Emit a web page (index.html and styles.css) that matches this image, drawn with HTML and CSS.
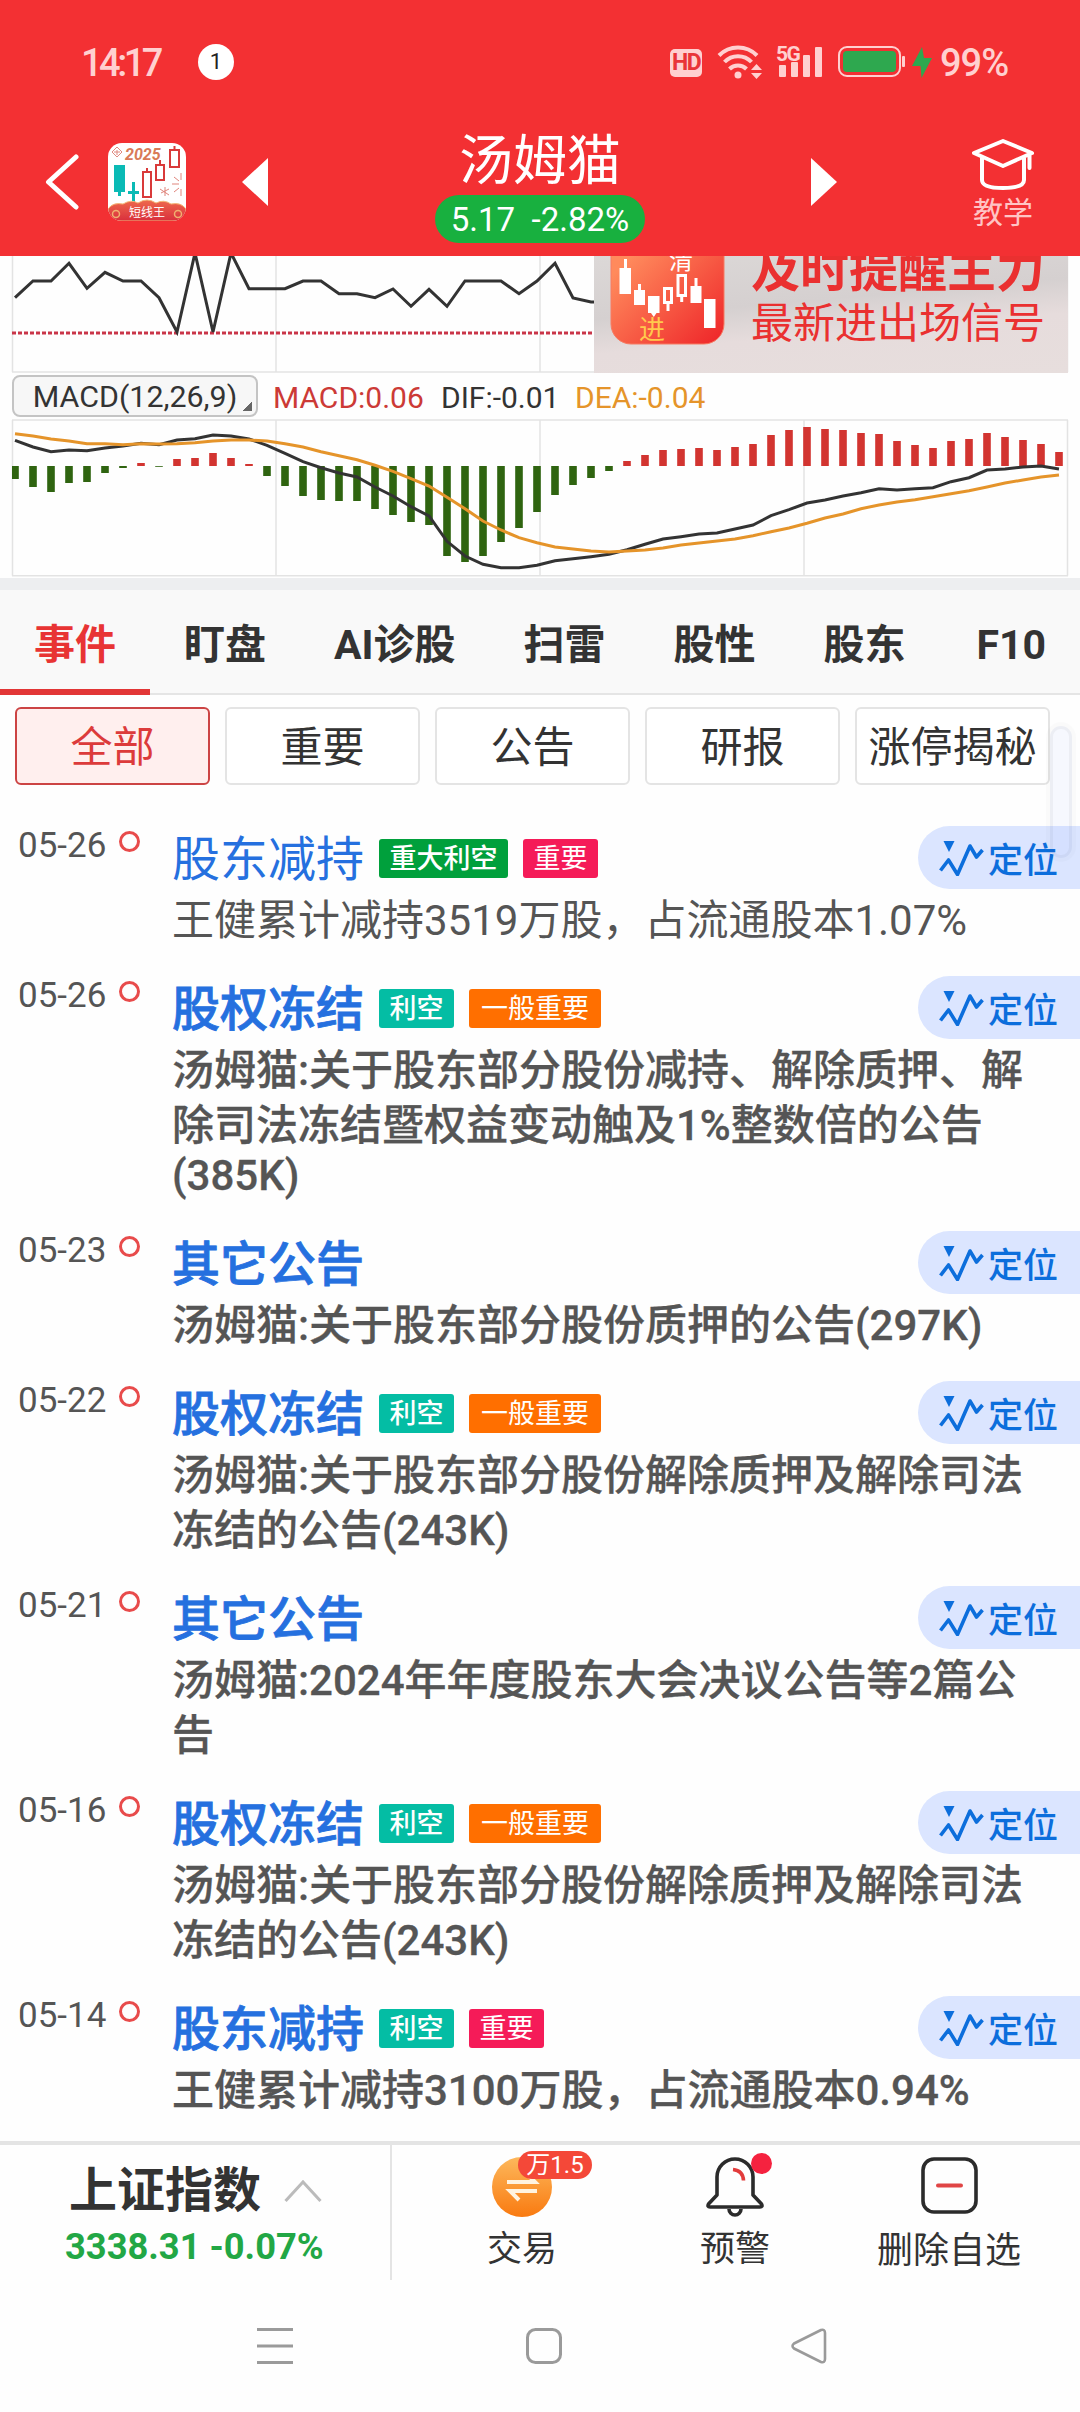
FILE: index.html
```html
<!DOCTYPE html>
<html lang="zh-CN">

<head>
    <meta charset="UTF-8">
    <meta name="viewport" content="width=device-width, initial-scale=1.0">
    <title>汤姆猫 5.17 -2.82%</title>
    <link rel="stylesheet" href="styles.css">
</head>

<body>
    <svg class="defs" width="0" height="0">
        <symbol id="locate" viewBox="0 0 46 36">
            <path d="M4.500 1h11l-5.500 11z" fill="currentColor" />
            <path d="M1.500 30.500l8-10.500L18.500 34.500 31 6l6.500 11 6-7" fill="none" stroke="currentColor" stroke-width="3.600" stroke-linejoin="round" />
        </symbol>
    </svg>

    <header class="header">
        <div class="status-bar">
            <span class="time">14:17</span>
            <span class="notice">1</span>
            <span class="hd">HD</span>
            <svg class="wifi" width="46" height="36" viewBox="0 0 46 36">
                <g fill="none" stroke="#ffd0d0" stroke-width="4">
                    <path d="M2 11.500a26.500 26.500 0 0 1 38 0" />
                    <path d="M7.500 18a18.500 18.500 0 0 1 27 0" />
                    <path d="M12.500 25a12 12 0 0 1 17 0" />
                </g>
                <circle cx="21" cy="31" r="3.500" fill="#ffd0d0" />
                <path d="M34 26h11l-5.500-6zM34 29h11l-5.500 6z" fill="#ffd0d0" />
            </svg>
            <div class="signal">
                <span class="net">5G</span>
                <svg width="46" height="32" viewBox="0 0 46 32" fill="#ffd0d0">
                    <rect x="3" y="19" width="7" height="12" rx="1" />
                    <rect x="15" y="16" width="7" height="15" rx="1" />
                    <rect x="27" y="9" width="7" height="22" rx="1" />
                    <rect x="39" y="1" width="7" height="30" rx="1" />
                </svg>
            </div>
            <svg class="battery" width="68" height="32" viewBox="0 0 68 32">
                <rect x="1" y="1" width="61" height="29" rx="8" fill="none" stroke="#ffd0d0" stroke-width="2" />
                <rect x="5" y="5" width="53" height="21" rx="4" fill="#2ea84f" />
                <rect x="64" y="10" width="3" height="11" rx="1" fill="#ffd0d0" />
            </svg>
            <svg class="bolt" width="20" height="31" viewBox="0 0 20 31">
                <path d="M10 0L0 19h8.500l1 12L20 11h-8z" fill="#2ea84f" />
            </svg>
            <span class="percent">99%</span>
        </div>
        <div class="title-bar">
            <svg class="back" width="34" height="56" viewBox="0 0 34 56">
                <path d="M31 3L3.500 28 31 53" fill="none" stroke="#fff" stroke-width="5" stroke-linecap="round" stroke-linejoin="round" />
            </svg>
            <svg class="app-icon" width="78" height="78" viewBox="0 0 78 78">
                <defs>
                    <clipPath id="iconClip"><rect width="78" height="78" rx="14" /></clipPath>
                    <linearGradient id="ribbon" x2="0" y2="1">
                        <stop offset="0" stop-color="#ee6a4d" />
                        <stop offset="1" stop-color="#d92f3c" />
                    </linearGradient>
                </defs>
                <g clip-path="url(#iconClip)">
                    <rect width="78" height="78" fill="#fff" />
                    <text class="icon-year" x="17" y="17">2025</text>
                    <path d="M9 4l5 5-5 5-5-5zM9 7v5M6 9h6" fill="none" stroke="#e08a80" />
                    <path d="M6 22h11v27h-4v4h-3v-4H6z" fill="#0abab5" />
                    <path d="M20 48h11v3H27v9h-3v-9h-4zM24 39h3v10h-3z" fill="#0abab5" />
                    <g fill="none" stroke="#d93a3a" stroke-width="2">
                        <path d="M35 29h8v25h-8zM39 25v4M48 22h8v15h-8zM52 17v5M62 7h9v17h-9zM66.500 3v4" />
                    </g>
                    <g stroke="#e0857c" stroke-width="1">
                        <path d="M73 30v7M66 34l5 4M64 41h7M66 49l5-4M73 46v7M53 50l8-4M57 44v9M52 46l9 6" fill="none" />
                    </g>
                    <path d="M0 66q5-7 15-5 8-5 15-1 9-6 18 0 8-4 15 1 10-2 15 5v12H0z" fill="url(#ribbon)" stroke="#f3b878" stroke-width="1" />
                    <circle cx="8" cy="71" r="3.500" fill="none" stroke="#f0b070" stroke-width="1.500" />
                    <circle cx="70" cy="71" r="3.500" fill="none" stroke="#f0b070" stroke-width="1.500" />
                    <text class="icon-name" x="39" y="74">短线王</text>
                </g>
            </svg>
            <svg class="prev" width="26" height="48" viewBox="0 0 26 48">
                <path d="M26 0v48L0 24z" fill="#fff" />
            </svg>
            <div class="stock">
                <h1>汤姆猫</h1>
                <span class="quote">5.17&nbsp; -2.82%</span>
            </div>
            <svg class="next" width="26" height="48" viewBox="0 0 26 48">
                <path d="M0 0v48l26-24z" fill="#fff" />
            </svg>
            <div class="teach">
                <svg width="62" height="52" viewBox="0 0 62 52" fill="none" stroke="#fff" stroke-width="4" stroke-linejoin="round" stroke-linecap="round">
                    <path d="M31 2L2 14l29 13 29-13zM10 19v22q0 8 21 8t21-8V19M57.500 16v13" />
                </svg>
                <span>教学</span>
            </div>
        </div>
    </header>

    <section class="charts">
        <svg id="trend" width="1080" height="117" viewBox="0 256 1080 117"></svg>
        <div class="banner">
            <svg width="474" height="117" viewBox="594 256 474 117">
                <defs>
                    <linearGradient id="promo" x2="1" y2="1">
                        <stop offset="0.200" stop-color="#ff8a5c" />
                        <stop offset="1" stop-color="#ee2328" />
                    </linearGradient>
                </defs>
                <rect x="611" y="231" width="113" height="113" rx="20" fill="url(#promo)" stroke="#f77b62" />
                <g fill="#fff">
                    <rect x="619.500" y="268" width="11.500" height="26" />
                    <rect x="624" y="259" width="3" height="10" />
                    <rect x="634" y="290" width="11" height="15" />
                    <rect x="638" y="284" width="3" height="7" />
                    <rect x="648" y="296" width="11.500" height="17" />
                    <path d="M651 313h5.500l-2.700 4z" />
                    <rect x="690.500" y="286" width="11" height="17" />
                    <rect x="694.500" y="278" width="3" height="9" />
                    <rect x="704" y="299" width="11.500" height="29" />
                </g>
                <g fill="none" stroke="#fff" stroke-width="3">
                    <path d="M664.500 288.500h7v14h-7zM668 303v8M678 275.500h7.500v20H678zM681.700 296v6" />
                </g>
                <text class="promo-out" x="669" y="269">清</text>
                <text class="promo-in" x="639" y="339">进</text>
            </svg>
            <div class="banner-text">
                <strong>及时提醒主力</strong>
                <span>最新进出场信号</span>
            </div>
        </div>
        <div class="macd-row">
            <button class="macd-select">MACD(12,26,9)</button>
            <span class="macd">MACD:0.06</span>
            <span class="dif">DIF:-0.01</span>
            <span class="dea">DEA:-0.04</span>
        </div>
        <svg id="macd" width="1080" height="158" viewBox="0 419 1080 158"></svg>
    </section>

    <nav class="tabs">
        <a class="active">事件</a>
        <a>盯盘</a>
        <a>AI诊股</a>
        <a>扫雷</a>
        <a>股性</a>
        <a>股东</a>
        <a class="last">F10</a>
    </nav>

    <main class="content">
        <div class="filters">
            <button class="filter active">全部</button>
            <button class="filter">重要</button>
            <button class="filter">公告</button>
            <button class="filter">研报</button>
            <button class="filter">涨停揭秘</button>
        </div>

        <article class="event read">
            <time>05-26</time><i class="dot"></i>
            <div class="detail">
                <h2>股东减持<b class="tag green">重大利空</b><b class="tag pink thin">重要</b></h2>
                <p>王健累计减持3519万股，占流通股本1.07%</p>
            </div>
            <a class="locate"><svg width="46" height="36"><use href="#locate" /></svg>定位</a>
        </article>
        <article class="event">
            <time>05-26</time><i class="dot"></i>
            <div class="detail">
                <h2>股权冻结<b class="tag teal">利空</b><b class="tag orange thin">一般重要</b></h2>
                <p>汤姆猫:关于股东部分股份减持、解除质押、解除司法冻结暨权益变动触及1%整数倍的公告<span class="size">(385K)</span></p>
            </div>
            <a class="locate"><svg width="46" height="36"><use href="#locate" /></svg>定位</a>
        </article>
        <article class="event">
            <time>05-23</time><i class="dot"></i>
            <div class="detail">
                <h2>其它公告</h2>
                <p>汤姆猫:关于股东部分股份质押的公告(297K)</p>
            </div>
            <a class="locate"><svg width="46" height="36"><use href="#locate" /></svg>定位</a>
        </article>
        <article class="event">
            <time>05-22</time><i class="dot"></i>
            <div class="detail">
                <h2>股权冻结<b class="tag teal">利空</b><b class="tag orange thin">一般重要</b></h2>
                <p>汤姆猫:关于股东部分股份解除质押及解除司法冻结的公告(243K)</p>
            </div>
            <a class="locate"><svg width="46" height="36"><use href="#locate" /></svg>定位</a>
        </article>
        <article class="event">
            <time>05-21</time><i class="dot"></i>
            <div class="detail">
                <h2>其它公告</h2>
                <p>汤姆猫:2024年年度股东大会决议公告等2篇公告</p>
            </div>
            <a class="locate"><svg width="46" height="36"><use href="#locate" /></svg>定位</a>
        </article>
        <article class="event">
            <time>05-16</time><i class="dot"></i>
            <div class="detail">
                <h2>股权冻结<b class="tag teal">利空</b><b class="tag orange thin">一般重要</b></h2>
                <p>汤姆猫:关于股东部分股份解除质押及解除司法冻结的公告(243K)</p>
            </div>
            <a class="locate"><svg width="46" height="36"><use href="#locate" /></svg>定位</a>
        </article>
        <article class="event">
            <time>05-14</time><i class="dot"></i>
            <div class="detail">
                <h2>股东减持<b class="tag teal">利空</b><b class="tag pink thin">重要</b></h2>
                <p>王健累计减持3100万股，占流通股本0.94%</p>
            </div>
            <a class="locate"><svg width="46" height="36"><use href="#locate" /></svg>定位</a>
        </article>
        <span class="scroll-thumb"></span>
    </main>

    <footer class="footer">
        <div class="index">
            <div class="index-name">上证指数
                <svg width="38" height="24" viewBox="0 0 38 24"><path d="M1.500 22L19 3l17.500 19" fill="none" stroke="#bbb" stroke-width="3" /></svg>
            </div>
            <div class="index-value">3338.31 -0.07%</div>
        </div>
        <div class="action">
            <svg width="60" height="60" viewBox="0 0 60 60">
                <defs>
                    <linearGradient id="coin" x2="0" y2="1">
                        <stop offset="0" stop-color="#fdb85c" />
                        <stop offset="1" stop-color="#f97a10" />
                    </linearGradient>
                </defs>
                <circle cx="30" cy="30" r="30" fill="url(#coin)" />
                <path d="M15 25h28L33 15M45 34H18l9 9" fill="none" stroke="#fff3e0" stroke-width="4" />
            </svg>
            <em class="rate">万1.5</em>
            <span>交易</span>
        </div>
        <div class="action">
            <svg width="60" height="60" viewBox="0 0 60 60" fill="none" stroke="#2b2b2b" stroke-width="3.600" stroke-linejoin="round">
                <path d="M12 38V20a18 18 0 0 1 36 0v18l8.500 9q1.500 3-1.500 3H5q-3 0-1.500-3z" />
                <path d="M24 52a6 6 0 0 0 12 0" />
                <path d="M28 12.500q10 1 10.500 11" stroke="#e23b3b" />
            </svg>
            <em class="unread"></em>
            <span>预警</span>
        </div>
        <div class="action">
            <svg width="60" height="60" viewBox="0 0 60 60" fill="none" stroke-width="3.600">
                <rect x="4" y="2" width="53" height="53" rx="11" stroke="#2b2b2b" />
                <path d="M19 28.500h23" stroke="#e04545" stroke-width="4" stroke-linecap="round" />
            </svg>
            <span>删除自选</span>
        </div>
    </footer>

    <div class="nav-bar">
        <svg width="36" height="36" viewBox="0 0 36 36"><path d="M0 1.500h36M0 18h36M0 34.500h36" stroke="#9a9a9a" stroke-width="3" /></svg>
        <svg class="home" width="36" height="36" viewBox="0 0 36 36"><rect x="1.500" y="1.500" width="33" height="33" rx="8" fill="none" stroke="#9a9a9a" stroke-width="3" /></svg>
        <svg width="36" height="36" viewBox="0 0 36 36"><path d="M3 15.500L30 2q4-1 4 3v26q0 4-4 3L3 20.500q-3-2.500 0-5z" fill="none" stroke="#9a9a9a" stroke-width="2.600" stroke-linejoin="round" /></svg>
    </div>

    <script src="script.js"></script>
</body>

</html>
```
FILE: styles.css
```css
* {
    box-sizing: border-box;
}
body {
    font-family: Roboto, "Noto Sans CJK SC", sans-serif;
    margin: 0;
    width: 1080px;
    height: 2412px;
    display: flex;
    flex-direction: column;
    overflow: hidden;
    background-color: #fefefe;
    color: #333;
}
svg {
    display: block;
    flex: none;
}
h1, h2, p {
    margin: 0;
    font-weight: 400;
}
button {
    font-family: inherit;
    padding: 0;
}
.defs {
    position: absolute;
}

/* header */
.header {
    height: 256px;
    flex: none;
    background-color: #f33033;
    color: #fff;
}
.status-bar {
    height: 124px;
    padding: 0 68px 0 81px;
    display: flex;
    align-items: center;
    color: #ffd0d0;
}
.time, .percent {
    padding-top: 2px;
    font-size: 38px;
    font-weight: 500;
    line-height: 44px;
    letter-spacing: -1px;
}
.time {
    width: 117px;
    letter-spacing: -3.500px;
}
.notice {
    width: 36px;
    height: 36px;
    border-radius: 50%;
    background-color: #fff;
    color: #222;
    font-size: 22px;
    line-height: 36px;
    text-align: center;
}
.hd {
    margin-left: auto;
    margin-top: 2px;
    width: 32px;
    height: 28px;
    border-radius: 5px;
    background-color: #ffd0d0;
    color: #e93438;
    font-size: 23px;
    font-weight: 700;
    line-height: 28px;
    text-align: center;
    letter-spacing: -1.500px;
}
.wifi {
    margin-left: 15px;
}
.signal {
    margin-left: 13px;
    position: relative;
}
.net {
    position: absolute;
    left: 0;
    top: -3px;
    font-size: 21px;
    font-weight: 700;
    line-height: 22px;
    letter-spacing: -1.500px;
}
.battery {
    margin-left: 16px;
}
.bolt {
    margin-left: 6px;
}
.percent {
    margin-left: 8px;
    width: 72px;
}
.title-bar {
    height: 132px;
    padding: 0 46px 17px 45px;
    display: flex;
    align-items: center;
}
.back {
    margin-right: 29px;
}
.prev {
    margin-left: 56px;
}
.icon-year {
    font-size: 16px;
    font-style: italic;
    font-weight: 700;
    fill: #d97a58;
}
.icon-name {
    font-size: 12px;
    fill: #fff;
    text-anchor: middle;
}
.stock {
    width: 210px;
    margin: 0 166px 0 167px;
    padding-top: 8px;
    display: flex;
    flex-direction: column;
    align-items: center;
}
.stock h1 {
    font-size: 54px;
    line-height: 66px;
}
.quote {
    width: 210px;
    height: 48px;
    border-radius: 24px;
    background-color: #18b03f;
    font-size: 33px;
    line-height: 49px;
    text-align: center;
    white-space: nowrap;
}
.teach {
    margin-left: auto;
    padding-top: 10px;
    display: flex;
    flex-direction: column;
    align-items: center;
    font-size: 30px;
    line-height: 44px;
    color: #ffc4c4;
}

/* charts */
.charts {
    height: 334px;
    flex: none;
    position: relative;
    border-bottom: 12px solid #edeef0;
}
.banner {
    position: absolute;
    left: 594px;
    top: 0;
    width: 474px;
    height: 117px;
    overflow: hidden;
    display: flex;
    background: linear-gradient(175deg, #dcd8d7 0%, #d5d0d0 40%, #e6dcdc 62%, #e7dedd 100%);
}
.banner-text {
    margin-left: -317px;
    margin-top: -14px;
    display: flex;
    flex-direction: column;
    white-space: nowrap;
    color: #ea3030;
}
.banner-text strong {
    font-size: 49px;
    line-height: 58px;
}
.banner-text span {
    font-size: 42px;
    line-height: 48px;
}
.promo-out {
    font-size: 24px;
    fill: #fff;
}
.promo-in {
    font-size: 26px;
    fill: #ffc94d;
}
.macd-row {
    height: 46px;
    padding: 2px 0 2px 12px;
    display: flex;
    align-items: center;
    font-size: 30px;
    line-height: 38px;
}
.macd-row span {
    padding-top: 3px;
}
.macd-select {
    width: 246px;
    height: 42px;
    margin-right: 15px;
    padding-top: 1px;
    border: 2px solid #c4c4c4;
    border-radius: 8px;
    background: linear-gradient(135deg, transparent 50%, #666 50%) right 4px bottom 4px / 9px 9px no-repeat #f7f7f7;
    color: #333;
    font-size: 30.400px;
    line-height: 38px;
    text-align: center;
}
.macd {
    width: 168px;
    color: #cc3a36;
}
.dif {
    width: 134px;
}
.dea {
    color: #e5942a;
}

/* tabs */
.tabs {
    height: 105px;
    flex: none;
    display: flex;
    background-color: #f9f9f9;
    border-bottom: 2px solid #e5e5e5;
    font-size: 41px;
    font-weight: 700;
    line-height: 110px;
    white-space: nowrap;
}
.tabs a {
    height: 105px;
    padding: 0 34px;
}
.tabs a.active {
    color: #e83434;
    border-bottom: 6px solid #e23636;
}
.tabs a.last {
    padding-left: 37px;
}

/* event list */
.content {
    flex: 1;
    min-height: 0;
    position: relative;
    padding-top: 12px;
}
.filters {
    display: flex;
    gap: 15px;
    padding-left: 15px;
    margin-bottom: 41px;
}
.filter {
    width: 195px;
    height: 78px;
    padding-top: 4px;
    border: 2px solid #e4e4e4;
    border-radius: 6px;
    background-color: #fff;
    color: #333;
    font-size: 42px;
    line-height: 70px;
    white-space: nowrap;
}
.filter.active {
    border-color: #cc4444;
    background-color: #ffefee;
    color: #dc3b3b;
}
.event {
    display: flex;
    align-items: flex-start;
    padding-bottom: 28px;
}
.event time {
    width: 101px;
    margin-left: 18px;
    font-size: 35px;
    line-height: 39px;
    color: #555;
}
.dot {
    width: 21px;
    height: 21px;
    margin-top: 5px;
    border: 3.500px solid #e84b4b;
    border-radius: 50%;
}
.detail {
    width: 860px;
    margin-left: 32px;
    margin-right: -114px;
}
.detail h2 {
    height: 67px;
    display: flex;
    align-items: center;
    font-size: 48px;
    font-weight: 500;
    line-height: 67px;
    color: #2570df;
    -webkit-text-stroke: 0.800px;
}
.detail p {
    font-size: 42px;
    font-weight: 500;
    line-height: 55px;
    color: #555;
    -webkit-text-stroke: 0.300px;
}
.size {
    display: block;
    line-height: 50px;
    margin-top: -2px;
    margin-bottom: 2px;
}
.read h2, .read p {
    font-weight: 400;
    -webkit-text-stroke: 0;
}
.tag {
    height: 39px;
    margin: -3px 0 0 15px;
    padding: 0 10.500px;
    border-radius: 3px;
    color: #fff;
    font-size: 27px;
    font-weight: 500;
    line-height: 40px;
    -webkit-text-stroke: 0;
}
.tag.thin {
    font-weight: 400;
}
.green {
    background-color: #00a03c;
}
.pink {
    background-color: #f51b58;
}
.teal {
    background-color: #04bda4;
}
.tag.orange {
    padding: 0 12px;
    background-color: #ff6f00;
}
.locate {
    width: 162px;
    height: 63px;
    flex: none;
    padding-left: 21px;
    display: flex;
    align-items: center;
    gap: 3px;
    border-radius: 32px 0 0 32px;
    background-color: #dbe5ff;
    color: #0c6edc;
    font-size: 35px;
    font-weight: 500;
}
.scroll-thumb {
    position: absolute;
    left: 1050px;
    top: 31px;
    width: 22px;
    height: 132px;
    border: 3px solid rgba(0, 0, 0, 0.040);
    border-radius: 11px;
    background-color: rgba(120, 150, 255, 0.060);
    box-shadow: 0 0 0 4px rgba(0, 0, 0, 0.015);
}

/* footer */
.footer {
    height: 139px;
    flex: none;
    display: flex;
    border-top: 4px solid #e4e4e4;
    background-color: #fefefe;
    position: relative;
}
.index {
    width: 392px;
    border-right: 2px solid #e4e4e4;
    padding-top: 16px;
}
.index-name {
    display: flex;
    align-items: center;
    gap: 23px;
    padding-left: 69px;
    font-size: 48px;
    font-weight: 700;
    line-height: 60px;
}
.index-value {
    padding-left: 65px;
    font-size: 36.300px;
    font-weight: 700;
    line-height: 52px;
    color: #22a745;
}
.action {
    width: 214px;
    padding-top: 12px;
    position: relative;
    display: flex;
    flex-direction: column;
    align-items: center;
    font-size: 35px;
    line-height: 65px;
}
.action:nth-child(2) {
    width: 260px;
}
.action:nth-child(3) {
    width: 166px;
}
.action:nth-child(4) {
    width: 262px;
    font-size: 36px;
    line-height: 69px;
}
.rate {
    position: absolute;
    left: 126px;
    top: 6px;
    width: 74px;
    height: 28px;
    border-radius: 14px;
    background-color: #f44838;
    color: #fff;
    font-size: 24px;
    font-style: normal;
    line-height: 28px;
    text-align: center;
}
.unread {
    position: absolute;
    left: 99px;
    top: 8px;
    width: 21px;
    height: 21px;
    border-radius: 50%;
    background-color: #f5223f;
}
.nav-bar {
    height: 132px;
    flex: none;
    display: flex;
    align-items: center;
    justify-content: space-between;
    padding: 0 253px 0 257px;
    background-color: #fefefe;
}
.home {
    margin-left: 3px;
}
```
FILE: script.js
```js
const STEP = 18;
const START = 15;
const GRID = '#e3e3e3';

const trend = [297.7, 281, 281, 263.3, 288.3, 272.3, 281, 281, 297.7, 332, 253, 332, 253, 288.7, 288.7, 288.7, 281, 281, 293.7, 293.7, 297.7, 289, 306.3, 289.3, 306.3, 281, 281, 281, 293.7, 281, 263.3, 298, 302, 302];

const bars = [479, 487, 492, 483, 482, 473, 468, 463, 466.8, 459, 458, 453, 458, 464, 476, 486, 496, 500, 501, 501, 509, 515, 522, 525, 556, 562, 556, 542, 528, 512, 495, 485, 478, 471, 461, 455, 450, 449, 448, 450, 447, 444, 435, 430, 427, 429, 430, 433, 434, 441, 445, 448, 441, 439, 433, 437, 440, 444, 452];

const dif = [440.3, 447, 451.7, 450, 450.7, 448, 446, 443.3, 444.7, 440, 438.7, 435, 436, 439, 445.3, 453.3, 461.7, 467.7, 473, 477, 487, 496, 506.7, 516, 541.3, 556, 564.3, 567.7, 567.7, 565.3, 560.7, 558.7, 556.7, 554.3, 549.7, 544.3, 539, 536.7, 534, 533, 529, 525, 515.7, 509.7, 503, 500, 496, 492.7, 488.7, 490, 488.7, 487.7, 481.7, 477.7, 470, 469, 467, 466, 469];

const dea = [433.7, 436, 439, 441, 443.7, 443.7, 444.7, 443.7, 444, 443.7, 442.7, 441, 440, 440, 441, 443.7, 447, 451.7, 455.7, 459.7, 465.3, 471.3, 478.7, 486, 497.3, 508.7, 521, 530, 537.7, 542.7, 547, 549, 551, 552, 551, 550, 548, 545, 543, 541, 539, 535.7, 531.7, 528, 523.3, 518, 514, 508.7, 505, 502, 499.7, 496.7, 493.7, 490.7, 487, 483, 480, 477, 475];

function line(data, color, width) {
    const points = data.map((y, i) => (START + i * STEP) + ',' + y).join(' ');
    return `<polyline points="${points}" fill="none" stroke="${color}" stroke-width="${width}" />`;
}

function grid(top, bottom) {
    return `<path d="M12 ${bottom}H1068M12.5 ${top}V${bottom}M276 ${top}V${bottom}M540 ${top}V${bottom}M804 ${top}V${bottom}M1067.5 ${top}V${bottom}" stroke="${GRID}" stroke-width="1.5" fill="none" />`;
}

function bar(y, i) {
    const zero = 466;
    const x = Math.max(START + i * STEP - 3.8, 12);
    const width = START + i * STEP + 3.8 - x;
    const color = y < zero ? '#d23430' : '#2f6410';
    return `<rect x="${x}" y="${Math.min(y, zero)}" width="${width}" height="${Math.abs(y - zero)}" fill="${color}" />`;
}

document.getElementById('trend').innerHTML =
    grid(256, 372) +
    '<path d="M12 333H594" stroke="#c93548" stroke-width="3" stroke-dasharray="4 2" />' +
    line(trend, '#333', 3);

document.getElementById('macd').innerHTML =
    grid(420, 575.7) +
    `<path d="M12 420H1068" stroke="${GRID}" stroke-width="1.5" />` +
    bars.map(bar).join('') +
    line(dif, '#333', 3) +
    line(dea, '#e5942a', 3);
```
